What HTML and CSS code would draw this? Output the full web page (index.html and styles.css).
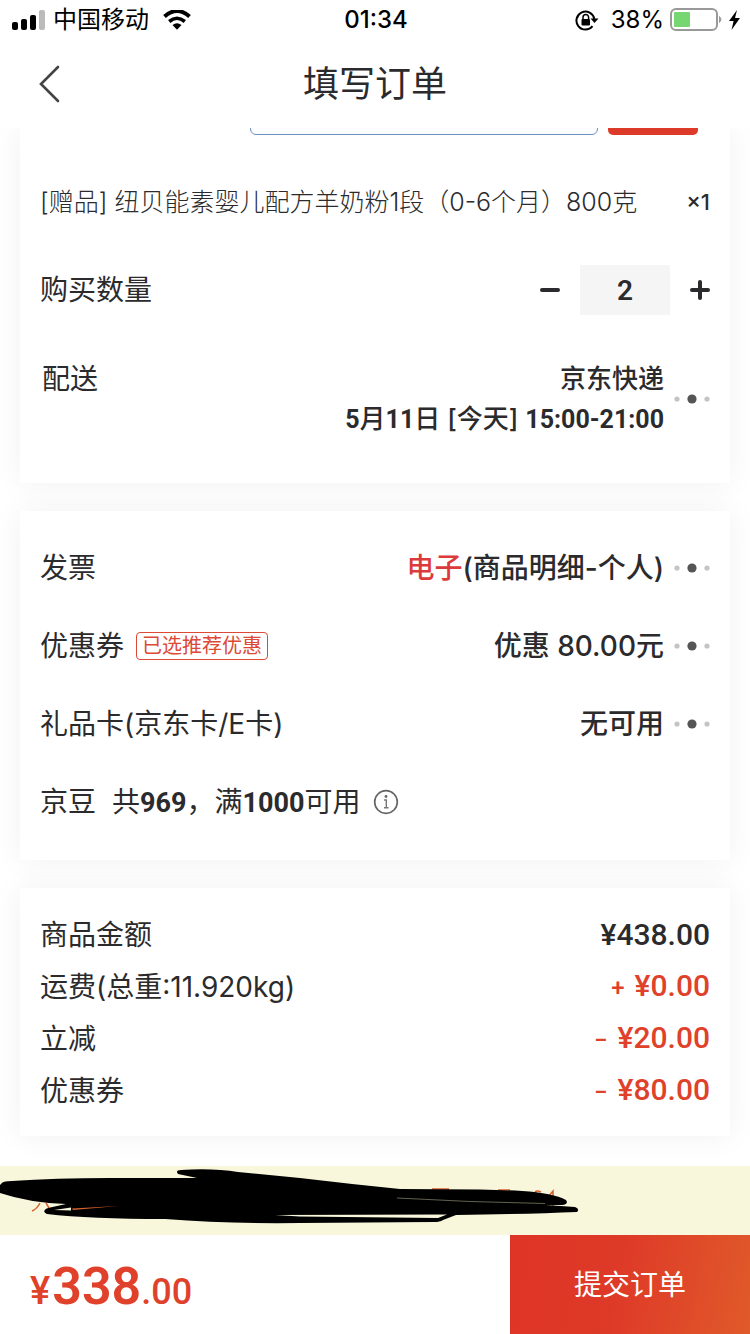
FILE: index.html
```html
<!DOCTYPE html>
<html lang="zh-CN">
<head>
<meta charset="utf-8">
<meta name="viewport" content="width=device-width, initial-scale=1">
<title>填写订单</title>
<link rel="stylesheet" href="styles.css">
</head>
<body>
<svg class="defs" aria-hidden="true">
  <symbol id="dots" viewBox="0 0 36 12">
    <circle cx="3" cy="6" r="2.6" fill="#c4c4c4"/><circle cx="18" cy="6" r="4.6" fill="#555"/><circle cx="33" cy="6" r="2.6" fill="#c4c4c4"/>
  </symbol>
</svg>
<div class="page">
  <div class="status">
    <div class="status-side">
      <svg width="34" height="20" viewBox="0 0 34 20" aria-hidden="true">
        <rect x="0" y="12" width="6" height="8" rx="2"/><rect x="9" y="9" width="6" height="11" rx="2"/><rect x="18" y="5" width="6" height="15" rx="2"/><rect x="27" y="0" width="6" height="20" rx="2" fill="#bbb"/>
      </svg>
      <span class="carrier">中国移动</span>
      <svg class="wifi" width="28" height="20" viewBox="0 0 28 20" aria-hidden="true">
        <path d="M1.500 6.500Q14-4.500 26.500 6.500" fill="none" stroke="#000" stroke-width="4"/>
        <path d="M6.200 11.500Q14 5 21.800 11.500" fill="none" stroke="#000" stroke-width="3.600"/>
        <path d="M9.500 15Q14 11.500 18.500 15L14 19.800Z"/>
      </svg>
    </div>
    <span class="clock">01:34</span>
    <div class="status-side status-right">
      <svg width="24" height="22" viewBox="0 0 24 22" aria-hidden="true">
        <path d="M17.500 17.200A9 9 0 1 1 19.300 10" fill="none" stroke="#000" stroke-width="2"/>
        <path d="M15.500 9.500H23.500L19.500 14Z"/>
        <rect x="6.500" y="10" width="8.500" height="6.500" rx="1"/>
        <path d="M8 10V8.200a2.800 2.800 0 0 1 5.600 0V10" fill="none" stroke="#000" stroke-width="1.500"/>
      </svg>
      <span class="percent">38%</span>
      <svg width="53" height="24" viewBox="0 0 53 24" aria-hidden="true">
        <rect x="1" y="1" width="46" height="21" rx="5" fill="none" stroke="#999" stroke-width="2"/>
        <rect x="4" y="4" width="16" height="15" rx="1" fill="#76d672"/>
        <path d="M49.500 8.500q3 3-0 6z" fill="#999" stroke="#999"/>
      </svg>
      <svg class="bolt" width="11" height="20" viewBox="0 0 11 20" aria-hidden="true"><path d="M8 0L0 11H4.600L2.500 20L11 8H6Z"/></svg>
    </div>
  </div>

  <header class="nav">
    <button class="back" type="button" aria-label="返回">
      <svg width="22" height="38" viewBox="0 0 22 38"><path d="M19 2L2 19L19 36" fill="none" stroke="#444" stroke-width="2.600" stroke-linecap="round"/></svg>
    </button>
    <h1 class="title">填写订单</h1>
  </header>

  <main class="content">
    <section class="card card-goods">
      <div class="cropped">
        <input class="cropped-field" type="text" aria-label="选项">
        <button class="cropped-button" type="button" aria-label="确定"></button>
      </div>
      <div class="gift">
        <span>[赠品] 纽贝能素婴儿配方羊奶粉1段（0-6个月）800克</span>
        <span class="gift-count">×1</span>
      </div>
      <div class="row row-tall">
        <label for="qty">购买数量</label>
        <div class="stepper">
          <button class="step" type="button" aria-label="减少"><svg width="20" height="20" viewBox="0 0 20 20"><path d="M2 10H18" stroke="#2b2b2d" stroke-width="4" stroke-linecap="round"/></svg></button>
          <input class="qty" id="qty" type="text" inputmode="numeric" value="2">
          <button class="step" type="button" aria-label="增加"><svg width="20" height="20" viewBox="0 0 20 20"><path d="M2 10H18M10 2V18" stroke="#2b2b2d" stroke-width="4" stroke-linecap="round"/></svg></button>
        </div>
      </div>
      <div class="row row-delivery">
        <span class="delivery-label">配送</span>
        <div class="value">
          <div class="delivery">
            <div>京东快递</div>
            <div><b>5</b>月<b>11</b>日 [今天] <b>15:00-21:00</b></div>
          </div>
          <button class="more" type="button" aria-label="配送详情"><svg width="36" height="12"><use href="#dots"/></svg></button>
        </div>
      </div>
    </section>

    <section class="card card-options">
      <div class="row">
        <span>发票</span>
        <div class="value"><span><span class="red">电子</span>(商品明细-个人)</span>
          <button class="more" type="button" aria-label="发票详情"><svg width="36" height="12"><use href="#dots"/></svg></button></div>
      </div>
      <div class="row">
        <div class="label-group"><span>优惠券</span><span class="tag">已选推荐优惠</span></div>
        <div class="value"><span>优惠 80.00元</span>
          <button class="more" type="button" aria-label="优惠券详情"><svg width="36" height="12"><use href="#dots"/></svg></button></div>
      </div>
      <div class="row">
        <span>礼品卡(京东卡/E卡)</span>
        <div class="value"><span>无可用</span>
          <button class="more" type="button" aria-label="礼品卡详情"><svg width="36" height="12"><use href="#dots"/></svg></button></div>
      </div>
      <div class="row row-beans">
        <span>京豆</span><span>共<b>969</b>，满<b>1000</b>可用</span>
        <button class="info" type="button" aria-label="京豆说明"><svg width="26" height="26" viewBox="0 0 26 26"><circle cx="13" cy="13" r="11.300" fill="none" stroke="#666" stroke-width="1.700"/><circle cx="13" cy="7.500" r="1.400" fill="#666"/><path d="M11 11H13.300V18.500M11 18.700H15.500" fill="none" stroke="#777" stroke-width="1.400"/></svg></button>
      </div>
    </section>

    <section class="card card-amounts">
      <div class="amount"><span>商品金额</span><span class="price">¥438.00</span></div>
      <div class="amount"><span>运费(总重:11.920kg)</span><span class="price price-red"><span class="sign">+</span>¥0.00</span></div>
      <div class="amount"><span>立减</span><span class="price price-red"><span class="sign">−</span>¥20.00</span></div>
      <div class="amount"><span>优惠券</span><span class="price price-red"><span class="sign">−</span>¥80.00</span></div>
    </section>
  </main>

  <div class="notice">
    <svg width="750" height="69" viewBox="0 0 750 69" aria-hidden="true">
      <path d="M32 45Q37 43 40 37M46 37L49 42M432 23H449M498 24H510M535 26Q537 24 541 26M548 31L553 25V40M542 39V36" fill="none" stroke="#d8602c" stroke-width="1.500"/>
      <path d="M1 18Q2 15 12 15Q55 12 110 12H197L178 8Q175 4 181 4Q213 2 238 6L300 12Q350 18 400 23L480 23.500Q505 24 522 25Q553 27 566 34Q569 38 562 39H546L575 41Q580 43 577 46Q530 48 456 49L443 54Q440 56 434 56L300 57Q230 58 165 53Q90 53 47 48Q41 45 48 42L66 38Q30 37 0 27V19Z"/>
      <path d="M54 44L71 41.500V44.500Z" fill="#f8f7dc"/><path d="M72 42.500L118 40L73 44Z" fill="#d8602c"/>
      <path d="M0 24L15 26L4 24.500ZM275 49L447 48.500L438 52L300 50.500Z" fill="#f8f7dc"/>
      <path d="M397 32L470 35.500L545 37.500" fill="none" stroke="#8e8b70" stroke-width=".7"/>
    </svg>
  </div>

  <footer class="footer">
    <div class="total"><span class="total-mark">¥</span><span class="total-main">338</span><span class="total-cents">.00</span></div>
    <button class="submit" type="button">提交订单</button>
  </footer>
</div>
</body>
</html>
```
FILE: styles.css
```css
* { box-sizing: border-box; }
body {
  margin: 0;
  background: #fff;
  color: #2b2b2d;
  font-family: Inter, "Noto Sans CJK SC", sans-serif;
  font-size: 28px;
  line-height: 40px;
}
button, input { margin: 0; padding: 0; border: 0; font: inherit; color: inherit; background: none; }
button { display: flex; align-items: center; justify-content: center; cursor: pointer; }
svg { display: block; flex: none; }
.defs { position: absolute; width: 0; height: 0; }
.page { display: flex; flex-direction: column; min-height: 100vh; }

.status { display: flex; align-items: center; height: 40px; padding: 0 10px 0 12px; color: #000; }
.status-side { display: flex; flex: 1; align-items: center; }
.status-right { justify-content: flex-end; }
.carrier { margin: 0 14px 0 7px; font-size: 24px; }
.clock { font-size: 24px; font-weight: 500; }
.percent { margin: 0 6px 0 12px; font-size: 24px; }
.bolt { margin-left: 6px; }

.nav { display: grid; grid-template-columns: 60px 1fr 60px; align-items: center; height: 88px; padding: 0 20px; }
.back { width: 60px; height: 60px; }
.title { margin: 0; text-align: center; font-size: 36px; font-weight: 400; }

.content { display: flex; flex-direction: column; gap: 28px; padding: 0 20px 30px; overflow: hidden; isolation: isolate; }
.card { position: relative; padding: 18px 20px 19px; background: #fff; }
.card::before { content: ""; position: absolute; inset: 0; z-index: -1; box-shadow: 0 0 30px rgba(0, 0, 0, .06); }
.card-goods { padding-top: 0; }

.cropped { display: flex; align-items: flex-end; justify-content: flex-end; gap: 10px; height: 7px; margin-bottom: 23px; padding-right: 12px; overflow: hidden; }
.cropped-field { width: 348px; height: 60px; border: 1px solid #6f8fc0; border-radius: 6px; background: #fbfdff; }
.cropped-button { width: 90px; height: 60px; border-radius: 5px; background: #dc3b2a; }

.gift { display: flex; align-items: center; justify-content: space-between; min-height: 88px; font-size: 25px; font-weight: 300; }
.gift-count { font-weight: 500; font-size: 22px; }
.row { display: flex; align-items: center; justify-content: space-between; min-height: 78px; }
.row-tall { min-height: 88px; }
.row-delivery { align-items: flex-start; padding: 25px 0; }
.delivery-label { padding-left: 2px; }
.delivery { text-align: right; font-size: 26px; font-weight: 500; }
.value { display: flex; align-items: center; gap: 10px; font-weight: 500; }
.more { width: 36px; height: 40px; }
.red { color: #dc3b3b; }
b { font-family: Roboto, sans-serif; font-size: 27px; font-weight: 700; line-height: 1; }
.delivery b { font-size: 25px; }

.stepper { display: flex; align-items: center; gap: 20px; }
.step { width: 20px; height: 50px; }
.qty { width: 90px; height: 50px; background: #f5f5f5; text-align: center; font-family: Roboto, sans-serif; font-weight: 600; }

.label-group { display: flex; align-items: center; gap: 12px; }
.tag { padding: 0 5px; border: 1px solid #dc4a35; border-radius: 4px; color: #dc4a35; font-size: 20px; line-height: 26px; }
.row-beans { justify-content: flex-start; gap: 16px; }
.info { width: 26px; height: 40px; margin-left: -4px; }

.card-amounts { padding-top: 21px; }
.amount { display: flex; align-items: center; justify-content: space-between; min-height: 52px; }
.price { font-family: Roboto, sans-serif; font-size: 30px; font-weight: 500; }
.price-red { color: #df412b; }
.sign { margin-right: 10px; font-size: 24px; }

.notice { background: #f8f7dc; overflow: hidden; }

.footer { display: flex; flex: 1; min-height: 99px; }
.total { display: flex; flex: 1; align-items: baseline; padding: 26px 0 0 30px; color: #df412b; font-family: Roboto, sans-serif; line-height: 52px; font-weight: 500; }
.total-mark { margin-right: 2px; font-size: 38px; }
.total-main { font-size: 52px; font-weight: 600; }
.total-cents { font-size: 36px; }
.submit { width: 32%; background: linear-gradient(100deg, #de3426 0%, #de3a28 45%, #e05a2a 100%); color: #fff; }
```
